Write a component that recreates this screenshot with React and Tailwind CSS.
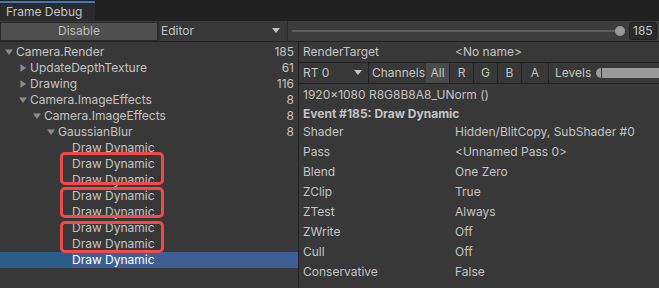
import React from 'react';

const tree = [
  { name: 'Camera.Render', level: 0, arrow: 'down', count: '185' },
  { name: 'UpdateDepthTexture', level: 1, arrow: 'right', count: '61' },
  { name: 'Drawing', level: 1, arrow: 'right', count: '116' },
  { name: 'Camera.ImageEffects', level: 1, arrow: 'down', count: '8' },
  { name: 'Camera.ImageEffects', level: 2, arrow: 'down', count: '8' },
  { name: 'GaussianBlur', level: 3, arrow: 'down', count: '8' },
  { name: 'Draw Dynamic', level: 4 },
  { name: 'Draw Dynamic', level: 4 },
  { name: 'Draw Dynamic', level: 4 },
  { name: 'Draw Dynamic', level: 4 },
  { name: 'Draw Dynamic', level: 4 },
  { name: 'Draw Dynamic', level: 4 },
  { name: 'Draw Dynamic', level: 4 },
  { name: 'Draw Dynamic', level: 4, selected: true },
];

const props = [
  ['Shader', 'Hidden/BlitCopy, SubShader #0'],
  ['Pass', '<Unnamed Pass 0>'],
  ['Blend', 'One Zero'],
  ['ZClip', 'True'],
  ['ZTest', 'Always'],
  ['ZWrite', 'Off'],
  ['Cull', 'Off'],
  ['Conservative', 'False'],
];

const Arrow = ({ dir }) =>
  dir === 'down' ? (
    <svg width="10" height="10" viewBox="0 0 10 10" className="shrink-0">
      <path d="M1 2.5h8L5 8z" fill="#8a8a8a" />
    </svg>
  ) : (
    <svg width="10" height="10" viewBox="0 0 10 10" className="shrink-0">
      <path d="M2.5 1v8L8 5z" fill="#8a8a8a" />
    </svg>
  );

const TreeRow = ({ row }) => {
  const pad = 4 + row.level * 14;
  return (
    <div className={`relative flex h-4 items-center pr-[4px] ${row.selected ? 'bg-[#3e5f96] text-white' : 'text-[#c4c4c4]'}`}>
      {row.selected && <div className="absolute left-0 top-0 h-4 w-[72px] bg-[#2c5d87]" />}
      <div className="relative flex flex-1 items-center" style={{ paddingLeft: pad }}>
        {row.arrow ? <Arrow dir={row.arrow} /> : <div className="w-[10px]" />}
        <span className="ml-[2px]">{row.name}</span>
      </div>
      {row.count && <span className="relative">{row.count}</span>}
    </div>
  );
};

export default function App() {
  return (
    <div className="flex h-[288px] w-[659px] flex-col overflow-hidden bg-[#383838] text-[12px] leading-4 text-[#c4c4c4]" style={{ fontFamily: 'Inter, "Noto Sans", sans-serif' }}>
      {/* Tab strip */}
      <div className="flex h-[21px] shrink-0 items-end bg-[#212121]">
        <div className="flex h-[20px] w-[95px] items-center border-t-2 border-[#3a79bb] bg-[#2b2b2b] pl-[6px] text-[#c4c4c4]">
          Frame Debug
        </div>
      </div>

      {/* Toolbar */}
      <div className="flex h-[21px] shrink-0 items-center border-b border-[#232323] bg-[#3c3c3c]">
        <div className="flex h-[19px] w-[158px] items-center justify-center border border-[#2a2a2a] bg-[#4f4f4f] text-[#bdbdbd]">
          Disable
        </div>
        <div className="flex h-[20px] w-[130px] items-center justify-between border-x border-[#2a2a2a] bg-[#383838] pl-[2px] pr-[7px]">
          <span>Editor</span>
          <svg width="8" height="6" viewBox="0 0 8 6"><path d="M0 0h8L4 5z" fill="#c4c4c4" /></svg>
        </div>
        <div className="relative mx-[4px] flex h-full flex-1 items-center">
          <div className="h-[2px] flex-1 bg-[#5e5e5e]" />
          <div className="h-[10px] w-[10px] rounded-full bg-[#999999]" />
        </div>
        <div className="mr-[2px] flex h-[18px] w-[28px] items-center rounded-[3px] border border-[#1e1e1e] bg-[#2a2a2a] pl-[3px]">185</div>
      </div>

      {/* Body */}
      <div className="flex min-h-0 flex-1">
        <div className="relative w-[299px] shrink-0 border-r border-[#232323] pt-[2px]">
          {tree.map((r, i) => (
            <TreeRow key={i} row={r} />
          ))}
          <div className="absolute left-[60px] top-[110px] h-[33px] w-[104px] rounded-[5px] border-[3px] border-[#f24a4a]" />
          <div className="absolute left-[60px] top-[145px] h-[31px] w-[104px] rounded-[5px] border-[3px] border-[#f24a4a]" />
          <div className="absolute left-[60px] top-[179px] h-[32px] w-[104px] rounded-[5px] border-[3px] border-[#f24a4a]" />
        </div>

        <div className="flex min-w-0 flex-1 flex-col">
          <div className="flex h-[21px] shrink-0 items-center border-b border-[#232323] pl-[4px]">
            <span className="w-[152px]">RenderTarget</span>
            <span>&lt;No name&gt;</span>
          </div>
          <div className="flex h-[21px] shrink-0 items-center border-b border-[#232323]">
            <div className="flex h-full w-[70px] items-center justify-between border-r border-[#232323] pl-[4px] pr-[6px]">
              <span>RT 0</span>
              <svg width="8" height="6" viewBox="0 0 8 6"><path d="M0 0h8L4 5z" fill="#c4c4c4" /></svg>
            </div>
            <span className="w-[57px] pl-[3px]">Channels</span>
            <div className="flex h-full w-[24px] items-center justify-center border-r border-[#232323] bg-[#4a4a4a]">All</div>
            <div className="flex h-full w-[24px] items-center justify-center border-r border-[#232323]">R</div>
            <div className="flex h-full w-[24px] items-center justify-center border-r border-[#232323]">G</div>
            <div className="flex h-full w-[24px] items-center justify-center border-r border-[#232323]">B</div>
            <div className="flex h-full w-[27px] items-center justify-center border-r border-[#232323]">A</div>
            <span className="ml-[6px]">Levels</span>
            <div className="ml-[5px] flex flex-1 items-center">
              <div className="h-[10px] w-[5px] rounded-l-full bg-[#999999]" />
              <div className="ml-[1px] h-[10px] flex-1 bg-[#999999]" />
            </div>
          </div>
          <div className="flex h-[21px] shrink-0 items-center pl-[4px]">1920x1080 R8G8B8A8_UNorm ()</div>
          <div className="flex h-[17px] shrink-0 items-center pl-[4px] font-bold">Event #185: Draw Dynamic</div>
          <div>
            {props.map(([k, v]) => (
              <div key={k} className="flex h-[20px] items-center pl-[4px]">
                <span className="w-[152px]">{k}</span>
                <span>{v}</span>
              </div>
            ))}
          </div>
        </div>
      </div>
    </div>
  );
}
